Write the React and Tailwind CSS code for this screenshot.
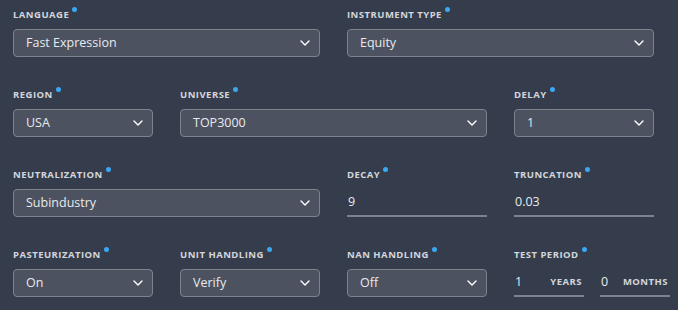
import React from "react";

const Chevron = () => (
  <svg width="10" height="6" viewBox="0 0 10 6" fill="none" className="shrink-0">
    <path d="M1 1L5 5L9 1" stroke="#ffffff" strokeWidth="1.4" strokeLinecap="round" strokeLinejoin="round" />
  </svg>
);

const Label = ({ children }) => (
  <div className="h-[12px] mb-[8px] flex items-start">
    <span className="relative text-[9.5px] leading-[12px] font-bold tracking-[0.05em] uppercase text-[#d3d6dc]">
      {children}
      <span className="absolute -right-[8px] -top-[2px] w-[5px] h-[5px] rounded-full bg-[#3aa8f2]" />
    </span>
  </div>
);

const Select = ({ value }) => (
  <div className="h-[28px] rounded-[4px] border border-[#7d828c] bg-[#4c5260] flex items-center justify-between pl-[12px] pr-[9px]">
    <span className="text-[12.5px] text-[#e8eaee]">{value}</span>
    <Chevron />
  </div>
);

const Underline = ({ value, suffix }) => (
  <div className="h-[28px] border-b-2 border-[#7d828c] flex items-center justify-between pt-[1px]">
    <span className="text-[12.5px] text-[#e8eaee] pl-[1px]">{value}</span>
    {suffix && (
      <span className="text-[9.5px] font-bold tracking-[0.05em] text-[#d3d6dc] pr-[2px]">{suffix}</span>
    )}
  </div>
);

const Field = ({ label, span, children }) => (
  <div className={span === 2 ? "col-span-2 flex flex-col" : "flex flex-col"}>
    <Label>{label}</Label>
    {children}
  </div>
);

export default function App() {
  return (
    <div
      className="w-[678px] h-[310px] bg-[#353d4c] overflow-hidden pl-[13px] pt-[9px]"
      style={{ fontFamily: '"Open Sans", "Noto Sans", sans-serif' }}
    >
      <div className="grid grid-cols-[repeat(4,140px)] gap-x-[27px] gap-y-[32px]">
        <Field label="Language" span={2}>
          <Select value="Fast Expression" />
        </Field>
        <Field label="Instrument Type" span={2}>
          <Select value="Equity" />
        </Field>

        <Field label="Region">
          <Select value="USA" />
        </Field>
        <Field label="Universe" span={2}>
          <Select value="TOP3000" />
        </Field>
        <Field label="Delay">
          <Select value="1" />
        </Field>

        <Field label="Neutralization" span={2}>
          <Select value="Subindustry" />
        </Field>
        <Field label="Decay">
          <Underline value="9" />
        </Field>
        <Field label="Truncation">
          <Underline value="0.03" />
        </Field>

        <Field label="Pasteurization">
          <Select value="On" />
        </Field>
        <Field label="Unit Handling">
          <Select value="Verify" />
        </Field>
        <Field label="NaN Handling">
          <Select value="Off" />
        </Field>
        <Field label="Test Period">
          <div className="flex gap-[16px] w-[156px]">
            <div className="w-[70px]">
              <Underline value="1" suffix="YEARS" />
            </div>
            <div className="w-[70px]">
              <Underline value="0" suffix="MONTHS" />
            </div>
          </div>
        </Field>
      </div>
    </div>
  );
}
